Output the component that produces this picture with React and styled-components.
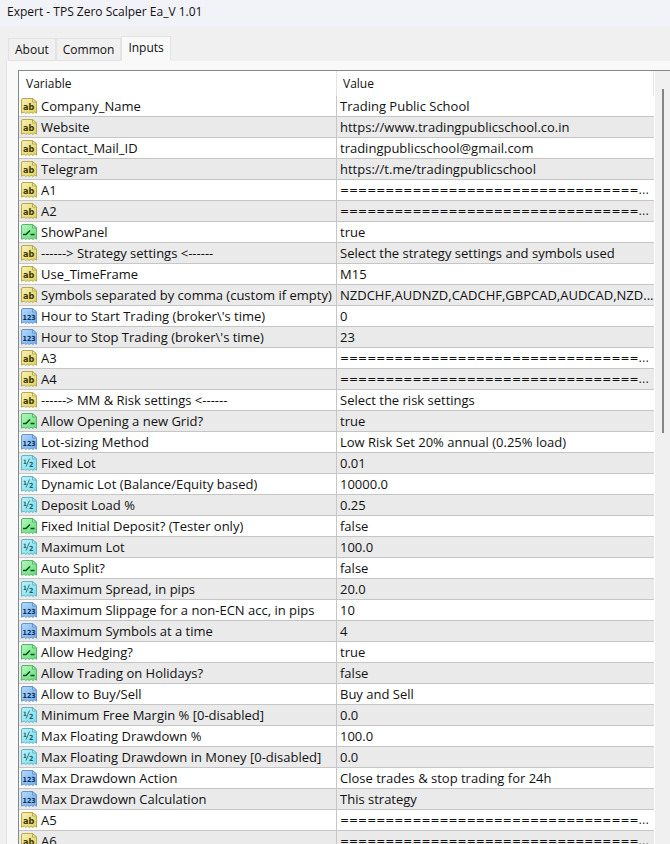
import React, { useState } from "react";
import { createGlobalStyle, styled } from "styled-components";

const EQUALS = "=".repeat(33) + "...";

const inputs = [
  ["text", "Company_Name", "Trading Public School"],
  ["text", "Website", "https://www.tradingpublicschool.co.in"],
  ["text", "Contact_Mail_ID", "tradingpublicschool@gmail.com"],
  ["text", "Telegram", "https://t.me/tradingpublicschool"],
  ["text", "A1", EQUALS],
  ["text", "A2", EQUALS],
  ["bool", "ShowPanel", "true"],
  [
    "text",
    "------> Strategy settings <------",
    "Select the strategy settings and symbols used",
  ],
  ["text", "Use_TimeFrame", "M15"],
  [
    "text",
    "Symbols separated by comma (custom if empty)",
    "NZDCHF,AUDNZD,CADCHF,GBPCAD,AUDCAD,NZD...",
  ],
  ["int", "Hour to Start Trading (broker\\'s time)", "0"],
  ["int", "Hour to Stop Trading (broker\\'s time)", "23"],
  ["text", "A3", EQUALS],
  ["text", "A4", EQUALS],
  ["text", "------> MM & Risk settings <------", "Select the risk settings"],
  ["bool", "Allow Opening a new Grid?", "true"],
  ["int", "Lot-sizing Method", "Low Risk Set 20% annual (0.25% load)"],
  ["real", "Fixed Lot", "0.01"],
  ["real", "Dynamic Lot (Balance/Equity based)", "10000.0"],
  ["real", "Deposit Load %", "0.25"],
  ["bool", "Fixed Initial Deposit? (Tester only)", "false"],
  ["real", "Maximum Lot", "100.0"],
  ["bool", "Auto Split?", "false"],
  ["real", "Maximum Spread, in pips", "20.0"],
  ["int", "Maximum Slippage for a non-ECN acc, in pips", "10"],
  ["int", "Maximum Symbols at a time", "4"],
  ["bool", "Allow Hedging?", "true"],
  ["bool", "Allow Trading on Holidays?", "false"],
  ["int", "Allow to Buy/Sell", "Buy and Sell"],
  ["real", "Minimum Free Margin % [0-disabled]", "0.0"],
  ["real", "Max Floating Drawdown %", "100.0"],
  ["real", "Max Floating Drawdown in Money [0-disabled]", "0.0"],
  ["int", "Max Drawdown Action", "Close trades & stop trading for 24h"],
  ["int", "Max Drawdown Calculation", "This strategy"],
  ["text", "A5", EQUALS],
  ["text", "A6", EQUALS],
];

const palette = {
  text: { light: "#f7f1b4", dark: "#e0d25e", edge: "#b9a94c", ink: "#3c3608" },
  bool: { light: "#b4f7bd", dark: "#62dd78", edge: "#55b568", ink: "#0f4a1b" },
  int: { light: "#b4d8fa", dark: "#72ade9", edge: "#6496cc", ink: "#0b2d58" },
  real: { light: "#bdf1f8", dark: "#7adbe8", edge: "#62b5c4", ink: "#14606f" },
};

const glyphs = {
  text: (
    <text x="2" y="12" fontSize="9">
      ab
    </text>
  ),
  bool: (
    <path d="M2 10.5h3l4-4M9.5 10.5h4" fill="none" strokeWidth="1.5" />
  ),
  int: (
    <text x="1.5" y="12" fontSize="7">
      123
    </text>
  ),
  real: (
    <>
      <text x="2" y="9" fontSize="6">
        1
      </text>
      <path d="M8.5 3.5 5 11.5" fill="none" strokeWidth="0.8" />
      <text x="8" y="12" fontSize="7">
        2
      </text>
    </>
  ),
};

const TypeIcon = ({ type }) => {
  const { light, dark, edge, ink } = palette[type];
  return (
    <S.Icon viewBox="0 0 16 16" aria-hidden="true">
      <defs>
        <linearGradient id={`fill-${type}`} x1="0" y1="0" x2="1" y2="1">
          <stop offset="0" stopColor={light} />
          <stop offset="1" stopColor={dark} />
        </linearGradient>
      </defs>
      <path
        d="M.5 2Q.5.5 2 .5H11.5L15.5 4V15.2L13.6 14 12 15.5 10.2 14.2 8.3 15.5 6.5 14.2 4.8 15.5 3.2 14 .5 15.2Z"
        fill={`url(#fill-${type})`}
        stroke={edge}
      />
      <path d="M11.5.5V4H15.5Z" fill={light} stroke={edge} />
      <S.Glyph $ink={ink} $outlined={type === "bool" || type === "real"}>
        {glyphs[type]}
      </S.Glyph>
    </S.Icon>
  );
};

const tabs = ["About", "Common", "Inputs"];

const App = () => {
  const [active, setActive] = useState("Inputs");

  return (
    <S.Window>
      <GlobalStyle />
      <S.TitleBar>Expert - TPS Zero Scalper Ea_V 1.01</S.TitleBar>
      <S.Tabs role="tablist">
        {tabs.map((tab) => (
          <S.Tab
            key={tab}
            role="tab"
            aria-selected={tab === active}
            $active={tab === active}
            onClick={() => setActive(tab)}
          >
            {tab}
          </S.Tab>
        ))}
      </S.Tabs>
      <S.Panel>
        <S.Frame>
          <S.Table>
            <colgroup>
              <col width="318" />
              <col />
            </colgroup>
            <thead>
              <tr>
                <S.Head>Variable</S.Head>
                <S.Head>Value</S.Head>
              </tr>
            </thead>
            <tbody>
              {inputs.map(([type, name, value]) => (
                <S.Row key={name}>
                  <S.Cell>
                    <S.Name>
                      <TypeIcon type={type} />
                      {name}
                    </S.Name>
                  </S.Cell>
                  <S.Cell $rule={value === EQUALS}>{value}</S.Cell>
                </S.Row>
              ))}
            </tbody>
          </S.Table>
          <S.ScrollTrack>
            <S.ScrollThumb />
          </S.ScrollTrack>
        </S.Frame>
      </S.Panel>
    </S.Window>
  );
};

export default App;

const GlobalStyle = createGlobalStyle`
  * {
    box-sizing: border-box;
  }
  body {
    margin: 0;
    overflow: hidden;
    background-color: #f0f0f0;
    color: #111;
    font-family: "Open Sans", "Noto Sans", sans-serif;
    font-size: 12px;
  }
`;

const S = {
  Window: styled.main`
    display: flex;
    flex-direction: column;
    height: 100vh;
    overflow: hidden;
  `,
  TitleBar: styled.header`
    flex: none;
    height: 27px;
    padding-left: 7px;
    line-height: 24px;
    background-color: #f1f3f9;
  `,
  Tabs: styled.div`
    flex: none;
    display: flex;
    align-items: flex-end;
    height: 34px;
    padding-left: 8px;
  `,
  Tab: styled.button`
    height: ${({ $active }) => ($active ? 25 : 23)}px;
    padding: 0 6px ${({ $active }) => ($active ? 2 : 0)}px;
    border: 1px solid #e3e3e3;
    border-bottom-color: ${({ $active }) => ($active ? "#f9f9f9" : "#e3e3e3")};
    background-color: ${({ $active }) => ($active ? "#f9f9f9" : "#f0f0f0")};
    color: inherit;
    font: inherit;
  `,
  Panel: styled.section`
    flex: 1;
    display: flex;
    min-height: 0;
    margin-left: 6px;
    padding: 9px 0 0 11px;
    border-left: 1px solid #e3e3e3;
    background-color: #f9f9f9;
  `,
  Frame: styled.div`
    flex: 1;
    display: flex;
    align-items: flex-start;
    min-width: 0;
    border: solid #828790;
    border-width: 1px 0 0 1px;
    background-color: #fff;
  `,
  Table: styled.table`
    flex: 1;
    width: 100%;
    min-width: 0;
    table-layout: fixed;
    border-collapse: separate;
    border-spacing: 0;
    font-size: 13px;
  `,
  Head: styled.th`
    height: 25px;
    padding: 0 6px 0 7px;
    border-right: 1px solid #e3e3e3;
    font-size: 12px;
    font-weight: normal;
    text-align: left;

    & + & {
      padding-left: 6px;
    }
  `,
  Row: styled.tr`
    &:nth-child(even) {
      background-color: #eaeaea;
    }
  `,
  Cell: styled.td`
    height: 21px;
    padding: 0 0 0 3px;
    border-bottom: 1px solid #c6c6c6;
    line-height: 20px;
    white-space: nowrap;
    overflow: hidden;
    ${({ $rule }) =>
      $rule && `font-family: "DejaVu Sans Condensed", sans-serif; font-size: 12px;`}

    &:first-child {
      padding-left: 2px;
      border-right: 1px solid #c6c6c6;
    }
  `,
  Name: styled.div`
    display: flex;
    align-items: center;
    gap: 4px;
  `,
  Icon: styled.svg`
    flex: none;
    width: 16px;
    height: 16px;
  `,
  Glyph: styled.g`
    fill: ${({ $ink }) => $ink};
    font-family: "DejaVu Sans Condensed", sans-serif;
    font-weight: bold;

    path {
      stroke: ${({ $ink }) => $ink};
    }
  `,
  ScrollTrack: styled.div`
    flex: none;
    align-self: stretch;
    width: 15px;
    margin-left: 1px;
    padding: 18px 6px 0 7px;
    background-color: #f0f0f0;
  `,
  ScrollThumb: styled.div`
    width: 2px;
    height: 344px;
    background-color: #858585;
  `,
};
